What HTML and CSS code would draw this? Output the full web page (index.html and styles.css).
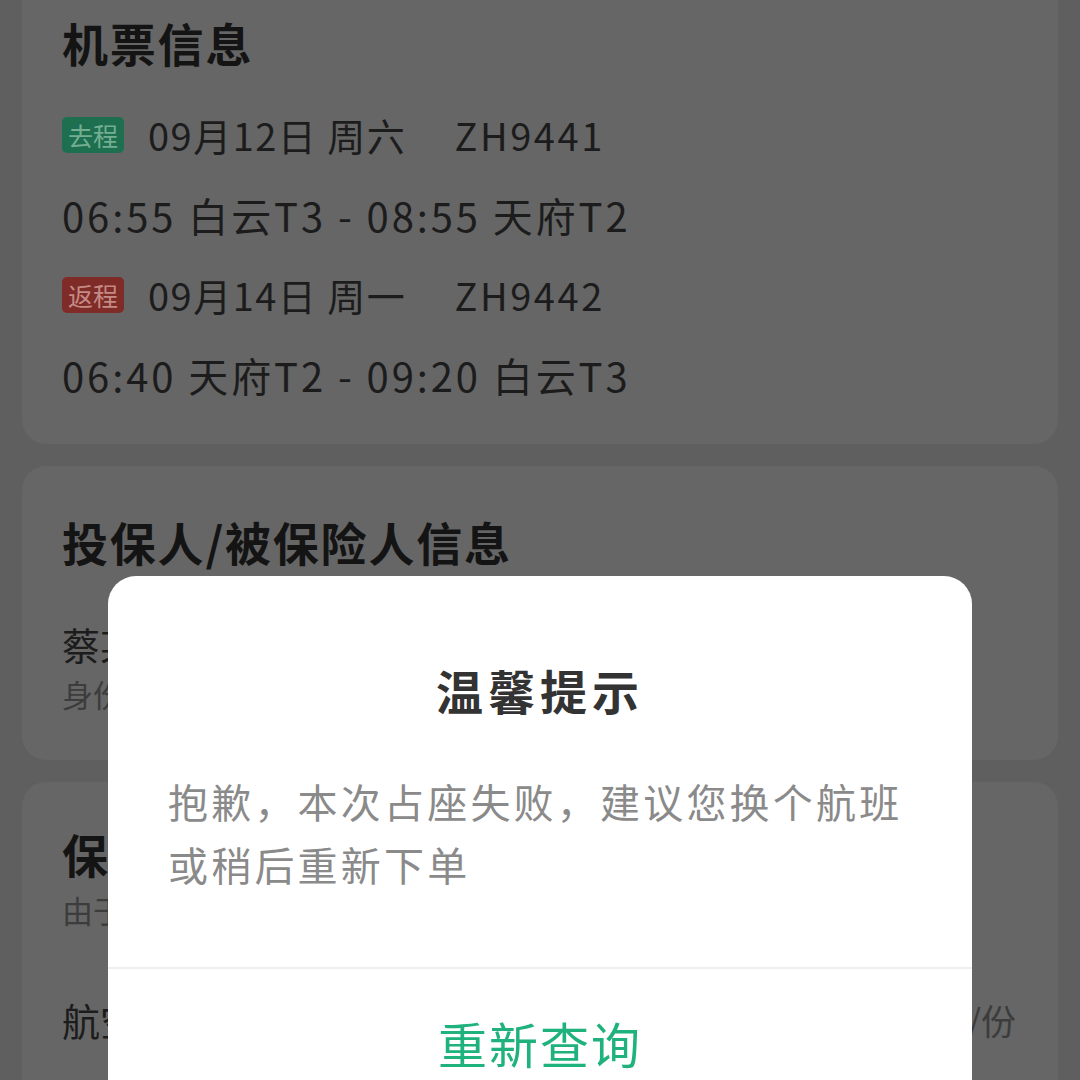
FILE: index.html
```html
<!DOCTYPE html>
<html lang="zh-CN">
<head>
<meta charset="utf-8">
<title>温馨提示</title>
<link rel="stylesheet" href="styles.css">
</head>
<body>
<div class="page">
  <section class="card card-ticket">
    <h2 class="card-title">机票信息</h2>
    <div class="row"><span class="tag tag-go">去程</span><span class="date">09月12日 周六</span><span class="flight">ZH9441</span></div>
    <div class="row">06:55 白云T3 - 08:55 天府T2</div>
    <div class="row"><span class="tag tag-back">返程</span><span class="date">09月14日 周一</span><span class="flight">ZH9442</span></div>
    <div class="row">06:40 天府T2 - 09:20 白云T3</div>
  </section>

  <section class="card card-person">
    <h2 class="card-title">投保人/被保险人信息</h2>
    <div class="name">蔡某某</div>
    <div class="sub">身份证 4401**********2318</div>
  </section>

  <section class="card card-insure">
    <h2 class="card-title">保险信息</h2>
    <div class="sub">由于航班变动，保险将随机票同步处理</div>
    <div class="item"><span>航空意外险</span><span class="price">¥30/份</span></div>
  </section>
</div>

<div class="dialog">
  <div class="dialog-body">
    <h3 class="dialog-title">温馨提示</h3>
    <p class="dialog-text">抱歉，本次占座失败，建议您换个航班或稍后重新下单</p>
  </div>
  <div class="dialog-btn">重新查询</div>
</div>
</body>
</html>
```
FILE: styles.css
```css
* { box-sizing: border-box; margin: 0; padding: 0; }

html, body {
  width: 1080px;
  height: 1080px;
  overflow: hidden;
}

body {
  background: #5f5f5f;
  font-family: "Noto Sans CJK SC", "Noto Sans", sans-serif;
  color: #1a1a1a;
  position: relative;
}

.page {
  padding: 0 22px;
  margin-top: -30px;
  display: flex;
  flex-direction: column;
  gap: 22px;
}

.card {
  background: #666666;
  border-radius: 24px;
  padding: 0 40px;
}

.card-title {
  font-size: 46px;
  line-height: 64px;
  font-weight: 700;
  letter-spacing: 1.8px;
  color: #141414;
}

.card-ticket { padding-top: 40px; padding-bottom: 29px; }
.card-ticket .card-title { margin-bottom: 21px; }

.row {
  display: flex;
  align-items: center;
  font-size: 40px;
  line-height: 80px;
  height: 80px;
  letter-spacing: 2.9px;
  color: #1c1c1c;
  white-space: nowrap;
}

.date {
  font-size: 38px;
  letter-spacing: 1.5px;
}

.flight {
  font-size: 38px;
  letter-spacing: 2.6px;
  margin-left: 48px;
}

.tag {
  display: inline-flex;
  align-items: center;
  justify-content: center;
  width: 62px;
  height: 36px;
  border-radius: 5px;
  font-size: 25px;
  line-height: 36px;
  letter-spacing: 0;
  margin-right: 24px;
}
.tag-go { background: #1e6f4f; color: #74ae92; }
.tag-back { background: #7f2b27; color: #c48a86; }

.card-person { padding-top: 43px; padding-bottom: 41px; }
.card-person .card-title { margin-bottom: 46px; }

.name {
  font-size: 38px;
  line-height: 50px;
  color: #1c1c1c;
}

.sub {
  font-size: 31px;
  line-height: 50px;
  color: #3c3c3c;
}

.card-insure { padding-top: 39px; padding-bottom: 60px; }

.item {
  margin-top: 60px;
  display: flex;
  justify-content: space-between;
  font-size: 38px;
  line-height: 50px;
  color: #1c1c1c;
  padding-right: 2px;
}
.price { color: #3c3c3c; font-size: 35px; }

.dialog {
  position: absolute;
  left: 108px;
  top: 576px;
  width: 864px;
  background: #ffffff;
  border-radius: 28px 28px 0 0;
  overflow: hidden;
}

.dialog-body {
  padding: 86px 60px 71px;
  border-bottom: 2px solid #eeeeee;
}

.dialog-title {
  text-align: center;
  font-size: 47px;
  line-height: 56px;
  font-weight: 700;
  letter-spacing: 5px;
  color: #333333;
  margin-bottom: 52px;
}

.dialog-text {
  font-size: 40px;
  line-height: 63px;
  letter-spacing: 3.2px;
  color: #8a8a8a;
}

.dialog-btn {
  text-align: center;
  font-size: 49px;
  line-height: 60px;
  letter-spacing: 2px;
  color: #1fb27c;
  padding-top: 44px;
  padding-bottom: 40px;
}
```
